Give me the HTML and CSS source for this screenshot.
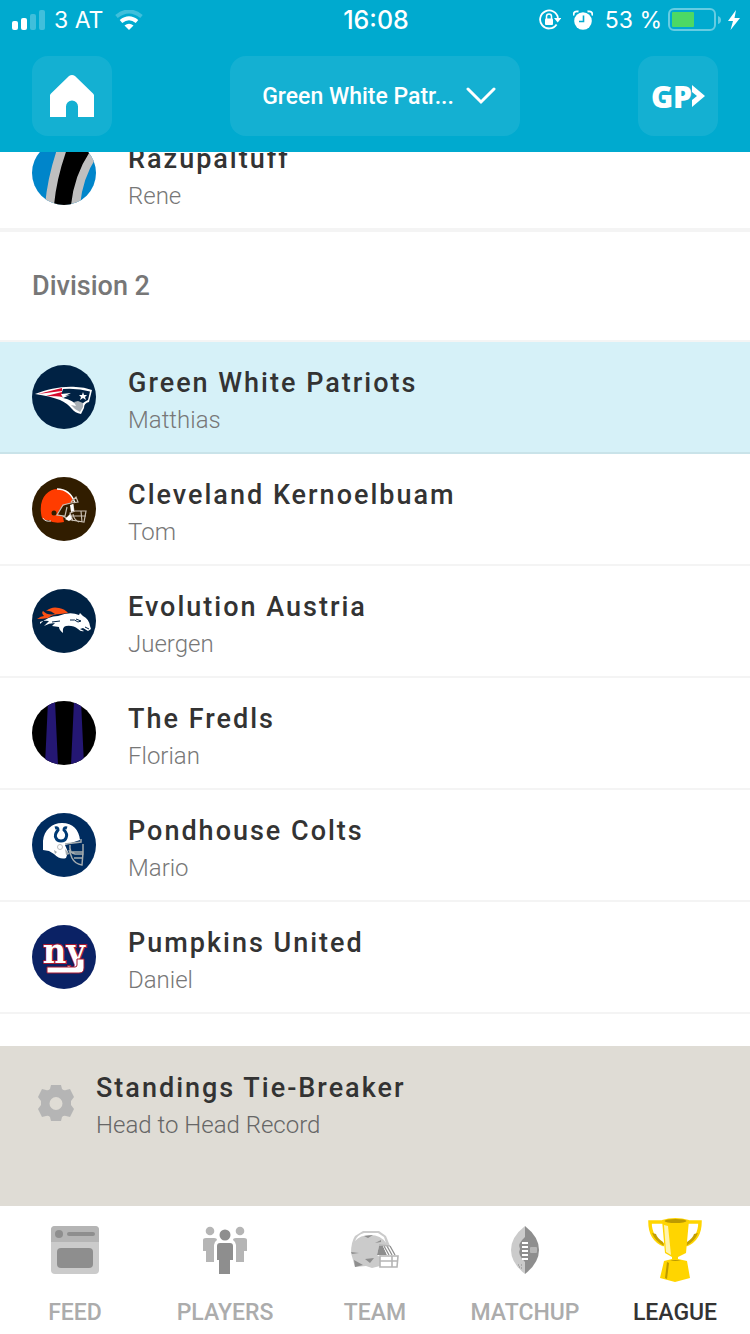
FILE: index.html
```html
<!DOCTYPE html>
<html lang="en">
<head>
<meta charset="utf-8">
<meta name="viewport" content="width=device-width, initial-scale=1">
<title>League</title>
<link rel="stylesheet" href="styles.css">
</head>
<body>
<div class="app">
  <header class="top">
    <div class="status">
      <div class="status-side">
        <svg width="34" height="20" viewBox="0 0 34 20" fill="#fff" aria-hidden="true"><rect y="11" width="6" height="9" rx="2"/><rect x="9" y="8" width="6" height="12" rx="2"/><g opacity=".25"><rect x="18" y="4" width="6" height="16" rx="2"/><rect x="27" width="6" height="20" rx="2"/></g></svg>
        <span class="carrier">3 AT</span>
        <svg class="wifi" width="28" height="20" viewBox="0 0 28 20" fill="none" stroke="#fff" aria-hidden="true"><path opacity=".25" d="M1.500 6.500Q14-3.500 26.500 6.500" stroke-width="4"/><path d="M6 11.500Q14 5 22 11.500" stroke-width="4"/><path d="M9.500 15.500Q14 12 18.500 15.500L14 20Z" fill="#fff" stroke="none"/></svg>
      </div>
      <time class="clock">16:08</time>
      <div class="status-side status-right">
        <svg width="22" height="22" viewBox="0 0 22 22" aria-hidden="true"><path d="M17.600 15.500A9 9 0 1 1 19 9" fill="none" stroke="#fff" stroke-width="1.800"/><path d="M15 9h7.500l-3.800 4.500z" fill="#fff"/><rect x="6" y="9.500" width="8" height="6.500" rx="1" fill="#fff"/><path d="M7.500 10V7.500a2.500 2.500 0 0 1 5 0V10" fill="none" stroke="#fff" stroke-width="1.500"/></svg>
        <svg class="alarm" width="20" height="20" viewBox="0 0 20 20" aria-hidden="true"><circle cx="10" cy="11" r="8.800" fill="#fff"/><path d="M.8 5.500C0 2 2.500.8 5.500 1.500M19.200 5.500C20 2 17.500.8 14.500 1.500" fill="none" stroke="#fff" stroke-width="1.800"/><path d="M10.500 5.500v6H6" fill="none" stroke="#00aacf" stroke-width="1.600"/></svg>
        <span class="charge">53 %</span>
        <svg width="54" height="24" viewBox="0 0 54 24" aria-hidden="true"><rect x="1" y="1" width="46" height="21" rx="5" fill="none" stroke="#fff" stroke-opacity=".4" stroke-width="2"/><rect x="4" y="4" width="22" height="15" rx="1" fill="#4cd964"/><path d="M50 8q3 1 3 4t-3 4z" fill="#fff" opacity=".4"/></svg>
        <svg width="12" height="20" viewBox="0 0 12 20" fill="#fff" aria-hidden="true"><path d="M8 0 0 11h5L2.500 20 12 8H6.500z"/></svg>
      </div>
    </div>
    <div class="toolbar">
      <button class="tile" type="button" aria-label="Home"><svg width="44" height="42" viewBox="0 0 44 42" fill="#fff"><path d="M0 42V20.500q0-1 1-2L19 1q3-2 6 0l18 17.500q1 1 1 2V42H28V31.500a6 6 0 0 0-12 0V42z"/></svg></button>
      <button class="picker" type="button" aria-haspopup="listbox"><span>Green White Patr...</span><svg width="30" height="18" viewBox="0 0 30 18" fill="none" stroke="#fff" stroke-width="3" stroke-linecap="round"><path d="m2 2 13 13L28 2"/></svg></button>
      <button class="tile gp" type="button"><span>GP</span><svg width="13" height="22" viewBox="0 0 13 22" fill="#fff"><path d="m0 0 13 11L0 22v-7l5-4-5-4z"/></svg></button>
    </div>
  </header>

  <main class="scroller">
    <div class="team">
      <svg class="avatar" viewBox="0 0 64 64" aria-hidden="true"><rect width="64" height="64" fill="#0085ca"/><path d="M13 64Q16 32 28 0h50Q52 25 48 64z" fill="#bfbfbf"/><path d="M22 64Q25 33 38 0h28Q43 27 39 64z"/></svg>
      <div class="text"><h2 class="name">Razupaltuff</h2><p class="owner">Rene</p></div>
    </div>
    <h1 class="division">Division 2</h1>
    <div class="team mine">
      <svg class="avatar" viewBox="0 0 64 64" aria-hidden="true"><rect width="64" height="64" fill="#002244"/><path d="M3 29C16 24 30 21 44 22q8 0 16 3l-3 12q-5 1-5 6l-3 6q-6-1-9-5-5-6-12-9-10-4-25-6z" fill="#fff"/><path d="M31 24q15-1 27 2.500L56 35q-5 2-7 6l-2 1q-6-7-16-9l-2-3z" fill="#002244"/><path d="m6 29 24-6v3zM14 31l16-4v5q-4-1-16-1z" fill="#d50a2d"/><path d="m29 29 10-1-6 3 5-1-7 3z" fill="#fff"/><path d="m51 27 1 3h3l-2 2 1 3-3-2-3 2 1-3-2-2h3z" fill="#fff"/><path d="m42 37 4-1 5 2v4l-3 5-5-3-4-4 5 1z" fill="#a9b0b6"/></svg>
      <div class="text"><h2 class="name">Green White Patriots</h2><p class="owner">Matthias</p></div>
    </div>
    <div class="team">
      <svg class="avatar" viewBox="0 0 64 64" aria-hidden="true"><rect width="64" height="64" fill="#311d00"/><path d="M10 41C5 22 16 11 27 12q12 1 14 13l-6 2q-8 3-9 10l5 3 1 5q-10 2-16-2-4 1-6-2z" fill="#ff3c00"/><path d="M25 12q13 0 18 14" fill="none" stroke="#fff" stroke-width="1.500"/><path d="M11 41q2 4 8 3" fill="none" stroke="#ddd"/><circle cx="22" cy="36" r="2.500" fill="#311d00"/><g fill="none" stroke="#c9bfb3" stroke-width="1.200"><path d="m39 25 5-5 2 5-7 1-8 2-6 10 8 1 2-9M30 39l9 4 13 2 2-11H43l-5 2 3 8M41 27l1 8M49 34l1 11M37 39h17M47 45q-5-2-6-8"/></g><path d="m33 42 5-5 2 5-3 2zM38 28l3-1 1 7-3 1z" fill="#fff"/></svg>
      <div class="text"><h2 class="name">Cleveland Kernoelbuam</h2><p class="owner">Tom</p></div>
    </div>
    <div class="team">
      <svg class="avatar" viewBox="0 0 64 64" aria-hidden="true"><rect width="64" height="64" fill="#002244"/><path d="M5 30q4-3 7-3-3-3-1-5 5 5 12 3-5-4-9-3 6-5 13-3 6 1 9 5l-8 1q-7 0-12 4-5 1-11 1z" fill="#fb4f14"/><path d="M8 35q8-8 18-8 12-5 21-1l1-2 3 3q6 3 7 10l1 3-3 2-5-3-3 1 4 2q-3 1-6-2-5-4-12-3-4 1-3 7-4-3-4-6l-7-1 3-3q-6 0-11 3l5-5q-5-1-9 1z" fill="#fff"/><path d="m44 30 5 2-3 1M53 38l4 2M20 33l8-1M38 31q5-1 8 2" fill="none" stroke="#002244"/></svg>
      <div class="text"><h2 class="name">Evolution Austria</h2><p class="owner">Juergen</p></div>
    </div>
    <div class="team">
      <svg class="avatar" viewBox="0 0 64 64" aria-hidden="true"><rect width="64" height="64"/><path d="M16 0h7l3 64H13zM42 0h7l3 64H39z" fill="#241773"/></svg>
      <div class="text"><h2 class="name">The Fredls</h2><p class="owner">Florian</p></div>
    </div>
    <div class="team">
      <svg class="avatar" viewBox="0 0 64 64" aria-hidden="true"><rect width="64" height="64" fill="#002c5f"/><path d="M11 37V28C12 17 20 10 30 10c11 0 17 7 18 17l-9 3-6 2 3 7-2 6q-6 2-12-4l-5-3z" fill="#fff"/><path d="M23 15q3-1 3 2-4 5-2 8 1 3 5 3t5-3q2-4-2-8 0-3 3-2" fill="none" stroke="#003b75" stroke-width="3"/><g fill="none" stroke="#a5acaf" stroke-width="1.500"><path d="m33 31 16-2v-3M38 32q-1 8 5 9h8V31M51 40l-1 12q-7-1-10-7l-3-8M42 45h9M39 39h12"/></g><circle cx="28" cy="34" r="2.500" fill="none" stroke="#bbb"/><path d="m22 37 3 2-2 2zM33 36l5 5-4 1z" fill="#a5acaf"/></svg>
      <div class="text"><h2 class="name">Pondhouse Colts</h2><p class="owner">Mario</p></div>
    </div>
    <div class="team">
      <svg class="avatar" viewBox="0 0 64 64" aria-hidden="true"><rect width="64" height="64" fill="#0b2265"/><text class="ny" x="32" y="38" text-anchor="middle">ny</text><path d="M45 34h7v9q0 5-5 5H15v-6h28q2 0 2-2z" fill="#fff" stroke="#a71930"/></svg>
      <div class="text"><h2 class="name">Pumpkins United</h2><p class="owner">Daniel</p></div>
    </div>
    <section class="rule">
      <svg class="gear" width="40" height="40" viewBox="0 0 40 40" aria-hidden="true"><path fill="#b5b5b5" fill-rule="evenodd" d="M15 2h10l1 4q2 2 4 1l4-1 4 8-3 4v4l3 4-4 8-4-1q-2-1-4 1l-1 4H15l-1-4q-2-2-4-1l-4 1-4-8 3-4v-4l-3-4 4-8 4 1q2 1 4-1zM20 14a6.500 6.500 0 1 0 0 13 6.500 6.500 0 0 0 0-13z"/></svg>
      <div><h2 class="name">Standings Tie-Breaker</h2><p class="owner">Head to Head Record</p></div>
    </section>
  </main>

  <nav class="tabs">
    <a class="tab" href="#feed"><span class="icon"><svg width="48" height="48" viewBox="0 0 48 48"><rect width="48" height="48" rx="4" fill="#cbcbcb"/><path d="M0 16V4q0-4 4-4h40q4 0 4 4v12z" fill="#b5b5b5"/><g fill="#8e8e8e"><circle cx="8" cy="8" r="4"/><rect x="16" y="6" width="28" height="4" rx="2"/><rect x="6" y="22" width="36" height="20" rx="4"/></g></svg></span>FEED</a>
    <a class="tab" href="#players"><span class="icon"><svg width="48" height="48" viewBox="0 0 48 48"><g fill="#b5b5b5"><circle cx="9" cy="5" r="4.300"/><circle cx="39" cy="5" r="4.300"/><path d="M2 14q0-2 3-2h8q3 0 3 2-3 2-3 5v17H5V25H2zM46 14q0-2-3-2h-8q-3 0-3 2 3 2 3 5v17h8V25h3z"/></g><g fill="#8e8e8e"><circle cx="24" cy="9" r="5.500"/><path d="M16 20q0-3 3-3h10q3 0 3 3v14h-3v14H18V34h-2z"/></g></svg></span>PLAYERS</a>
    <a class="tab" href="#team"><span class="icon"><svg width="48" height="48" viewBox="0 0 48 48"><path d="M4 41 0 27Q0 16 4 10l8-5h16l7 5 4 10H28l-2 9 3 2v9l-8 2-6-2z" fill="#cbcbcb"/><path d="M4 15Q6 9 13 7h14l6 4 2 6Q30 9 19 9 9 9 4 15z" fill="#fff"/><path d="m13 10 9-1-5 3zM24 17l6-3v2zM0 26l8 1-7 1zM3 34l9 5-8 2zM14 33l9-1-4 5zM28 20h4l4 9H26z" fill="#8e8e8e"/><path d="M32 20h7l5 9h-8z" fill="#fff"/><g fill="none" stroke="#8e8e8e" stroke-width="1.300"><path d="m33 20 5 9M36 20l5 9M39 20l5 9"/></g><g fill="none" stroke="#b5b5b5" stroke-width="1.600"><path d="m28 19 11 1M29 30h18l-1 11H29zM29 35h17M41 30v11"/></g></svg></span>TEAM</a>
    <a class="tab" href="#matchup"><span class="icon"><svg width="48" height="48" viewBox="0 0 48 48"><path d="M24 0v48Q10 37 10 24T24 0z" fill="#cbcbcb"/><path d="M24 0v48q14-11 14-24T24 0z" fill="#8e8e8e"/><path d="M24 11q-8 7-5 12-3 5 5 13z" fill="#8e8e8e"/><path d="M21 17h6M21 21h6M21 25h6M21 29h6M21 33h6" stroke="#fff" stroke-width="2.200"/><rect x="29" y="21" width="7" height="6" rx="1" fill="#b5b5b5"/><path d="M17 39h1M20 39h1M18 41h1M20 42h1" stroke="#888"/></svg></span>MATCHUP</a>
    <a class="tab active" href="#league"><span class="icon"><svg width="54" height="64" viewBox="0 0 54 64"><path d="M15 4H2q0 17 14 23M39 4h13q0 17-14 23" fill="none" stroke="#ffd500" stroke-width="3.500"/><path d="M4 15q3 8 12 13l-1-4Q9 20 8 16zM50 15q-3 8-12 13l1-4q6-4 7-8z" fill="#c4a000"/><path d="M14 2q13-4 27 0l-3 33-8 4v2l9 2 3 17-15 4-15-4 4-17 8-2v-2l-7-4z" fill="#ffd500"/><path d="m16 7 4 1 3 29-5-3z" fill="#fff4ad"/><ellipse cx="27.500" cy="3" rx="11" ry="2" fill="#bd9a00"/><path d="m19 44-2 16 2 1 2-16zM22 42q5 2 11 0" fill="#bd9a00"/></svg></span>LEAGUE</a>
  </nav>
</div>
</body>
</html>
```
FILE: styles.css
```css
* { box-sizing: border-box; }

body {
  margin: 0;
  font-family: Roboto, "Noto Sans", sans-serif;
  color: #333;
  background: #fff;
}

h1, h2, p { margin: 0; }

svg { display: block; flex: none; }

button {
  border: 0;
  color: inherit;
  font: inherit;
  background: rgba(255, 255, 255, .08);
  border-radius: 16px;
}

.app {
  display: flex;
  flex-direction: column;
  height: 100vh;
}

.top {
  flex: none;
  color: #fff;
  background: #00aacf;
}

.status {
  display: grid;
  grid-template-columns: 1fr auto 1fr;
  align-items: center;
  height: 40px;
  padding: 0 10px 0 12px;
  font-family: Inter, sans-serif;
  font-size: 23px;
}

.status-side {
  display: flex;
  align-items: center;
  gap: 8px;
}

.status-right {
  justify-content: flex-end;
  gap: 6px;
}

.carrier { white-space: nowrap; }

.wifi { margin-left: 4px; }

.clock {
  font-size: 25px;
  font-weight: 500;
}

.alarm { margin: 0 6px; }

.charge { white-space: nowrap; }

.toolbar {
  display: flex;
  justify-content: space-between;
  padding: 16px 32px;
}

.tile {
  display: flex;
  align-items: center;
  justify-content: center;
  width: 80px;
  height: 80px;
  padding: 0;
}

.gp {
  font-family: "Noto Sans", sans-serif;
  font-size: 30px;
  font-weight: 900;
}

.picker {
  display: flex;
  align-items: center;
  gap: 12px;
  height: 80px;
  padding: 0 24px 0 32px;
  font-size: 23px;
  font-weight: 500;
}

.scroller {
  display: flex;
  flex: 1;
  flex-direction: column;
  justify-content: flex-end;
  min-height: 0;
  overflow: hidden;
}

.team {
  display: flex;
  flex: none;
  align-items: center;
  gap: 32px;
  height: 112px;
  padding: 0 32px;
  border-bottom: 2px solid #f4f4f4;
}

.mine {
  background: #d6f1f8;
  border-color: #c9e3e9;
}

.avatar {
  width: 64px;
  height: 64px;
  border-radius: 50%;
}

.ny {
  font: bold 36px "DejaVu Serif Condensed", "DejaVu Serif", serif;
  fill: #fff;
  stroke: #a71930;
  stroke-width: 2px;
  paint-order: stroke;
}

.text { padding-top: 8px; }

.name {
  font-size: 27px;
  font-weight: 500;
  line-height: 38px;
  letter-spacing: 2px;
}

.owner {
  color: #777;
  font-size: 24px;
  font-weight: 300;
  line-height: 36px;
}

.division {
  display: flex;
  flex: none;
  align-items: center;
  height: 112px;
  padding: 0 32px;
  color: #777;
  font-size: 27px;
  font-weight: 500;
  border-top: 2px solid #f4f4f4;
  border-bottom: 2px solid #f4f4f4;
}

.rule {
  display: flex;
  flex: none;
  gap: 20px;
  height: 160px;
  margin-top: 32px;
  padding: 23px 36px;
  background: #dfdcd5;
}

.rule .owner { color: #666; }

.gear { margin-top: 14px; }

.tabs {
  display: grid;
  flex: none;
  grid-template-columns: repeat(5, 1fr);
  padding: 12px 0 6px;
}

.tab {
  display: flex;
  flex-direction: column;
  align-items: center;
  gap: 16px;
  color: #acacac;
  font-size: 23px;
  font-weight: 500;
  line-height: 30px;
  text-decoration: none;
}

.icon {
  display: flex;
  align-items: center;
  height: 64px;
}

.active { color: #333; }
```
